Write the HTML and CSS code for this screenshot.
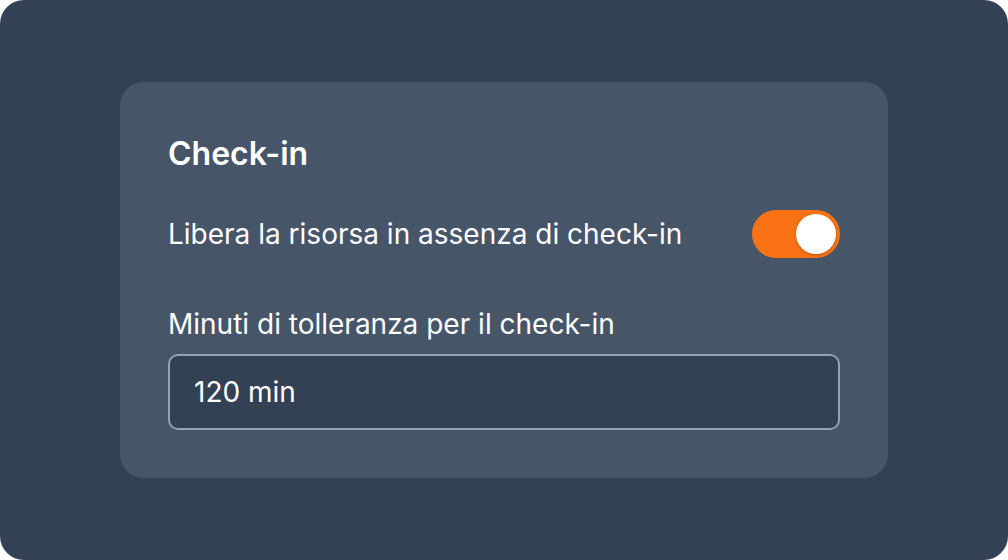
FILE: index.html
```html
<!DOCTYPE html>
<html lang="it">
<head>
<meta charset="utf-8">
<title>Check-in</title>
<link rel="stylesheet" href="styles.css">
</head>
<body>
<div class="screen">
  <section class="card">
    <h2 class="title">Check-in</h2>
    <div class="row">
      <span class="row-label">Libera la risorsa in assenza di check-in</span>
      <button class="toggle" type="button" aria-pressed="true"><span class="knob"></span></button>
    </div>
    <div class="field">
      <label class="field-label" for="tol">Minuti di tolleranza per il check-in</label>
      <input class="input" id="tol" type="text" value="120 min">
    </div>
  </section>
</div>
</body>
</html>
```
FILE: styles.css
```css
* { box-sizing: border-box; }
html, body { margin: 0; padding: 0; background: #ffffff; }
body { font-family: Inter, "Noto Sans", sans-serif; color: #ffffff; }
.screen {
  width: 1008px;
  height: 560px;
  background: #334155;
  border-radius: 24px;
  display: flex;
  align-items: center;
  justify-content: center;
}
.card {
  width: 768px;
  background: #475569;
  border-radius: 24px;
  padding: 48px;
}
.title {
  margin: 0;
  font-size: 32px;
  font-weight: 600;
  line-height: 48px;
}
.row {
  margin-top: 32px;
  display: flex;
  align-items: center;
  justify-content: space-between;
}
.row-label { font-size: 28px; line-height: 36px; }
.toggle {
  width: 88px;
  height: 48px;
  border: none;
  border-radius: 24px;
  background: #f97316;
  padding: 4px;
  display: flex;
  justify-content: flex-end;
  cursor: pointer;
}
.knob {
  width: 40px;
  height: 40px;
  border-radius: 50%;
  background: #ffffff;
  box-shadow: 0 1px 3px rgba(0,0,0,0.25);
}
.field { margin-top: 48px; }
.field-label {
  display: block;
  font-size: 28px;
  line-height: 36px;
}
.input {
  display: block;
  margin-top: 12px;
  width: 100%;
  height: 76px;
  border: 2px solid #94a3b8;
  border-radius: 10px;
  background: #334155;
  color: #ffffff;
  font-family: Inter, "Noto Sans", sans-serif;
  font-size: 28px;
  padding: 0 24px;
  outline: none;
}
```
